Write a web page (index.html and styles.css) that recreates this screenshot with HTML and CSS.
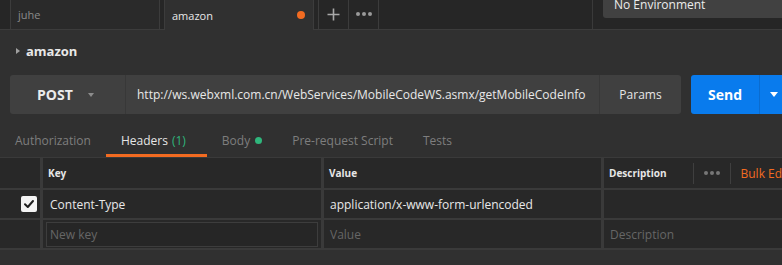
FILE: index.html
```html
<!DOCTYPE html>
<html>
<head>
<meta charset="utf-8">
<link rel="stylesheet" href="styles.css">
</head>
<body>
<div class="app">
  <div class="topbar">
    <div class="tab tab-inactive"><span class="tab-label">juhe</span></div>
    <div class="tab tab-active"><span class="tab-label">amazon</span><span class="unsaved-dot"></span></div>
    <div class="tab tab-icon">
      <svg width="13" height="13" viewBox="0 0 13 13"><path d="M6.5 0.5V12.5M0.5 6.5H12.5" stroke="#a8a8a8" stroke-width="1.6" fill="none"/></svg>
    </div>
    <div class="tab tab-icon tab-more">
      <span class="dot"></span><span class="dot"></span><span class="dot"></span>
    </div>
    <div class="spacer"></div>
    <div class="vdivider"></div>
    <div class="env"><span class="env-label">No Environment</span></div>
  </div>

  <div class="main">
    <div class="title-row">
      <span class="tri-right"></span>
      <span class="title">amazon</span>
    </div>

    <div class="url-row">
      <div class="url-group">
        <div class="method"><span class="method-label">POST</span><span class="caret-down"></span></div>
        <div class="url">http://ws.webxml.com.cn/WebServices/MobileCodeWS.asmx/getMobileCodeInfo</div>
        <div class="params">Params</div>
      </div>
      <div class="send">
        <div class="send-main">Send</div>
        <div class="send-caret"><span class="caret-white"></span></div>
      </div>
    </div>

    <div class="req-tabs">
      <div class="req-tab">Authorization</div>
      <div class="req-tab req-tab-active">Headers <span class="count">(1)</span></div>
      <div class="req-tab">Body <span class="green-dot"></span></div>
      <div class="req-tab">Pre-request Script</div>
      <div class="req-tab">Tests</div>
    </div>

    <div class="table">
      <div class="cell"></div>
      <div class="cell th">Key</div>
      <div class="cell th">Value</div>
      <div class="cell th th-desc">
        <span class="th-item">Description</span>
        <span class="th-item th-spacer"></span>
        <span class="th-item th-sep"></span>
        <span class="th-item th-dots"><span class="sdot"></span><span class="sdot"></span><span class="sdot"></span></span>
        <span class="th-item th-sep"></span>
        <span class="th-item bulk">Bulk Edit</span>
      </div>

      <div class="cell cell-check">
        <span class="checkbox"><svg width="16" height="16" viewBox="0 0 16 16"><path d="M4 8.3L6.8 11L12 5" stroke="#1e1e1e" stroke-width="2" fill="none" stroke-linecap="round" stroke-linejoin="round"/></svg></span>
      </div>
      <div class="cell td td-key">Content-Type</div>
      <div class="cell td td-val">application/x-www-form-urlencoded</div>
      <div class="cell td"></div>

      <div class="cell"></div>
      <div class="cell td-input-cell"><div class="key-input">New key</div></div>
      <div class="cell td placeholder td-val">Value</div>
      <div class="cell td placeholder td-desc">Description</div>
    </div>
  </div>
</div>
</body>
</html>
```
FILE: styles.css
```css
* { box-sizing: border-box; }
html, body {
  margin: 0;
  padding: 0;
  width: 782px;
  height: 265px;
  overflow: hidden;
  background: #303030;
  font-family: "Open Sans", "Liberation Sans", sans-serif;
  color: #e6e6e6;
}
.app { width: 782px; height: 265px; overflow: hidden; }

/* top bar */
.topbar {
  display: flex;
  height: 30px;
  background: #262626;
  border-bottom: 1px solid #3c3c3c;
  padding-left: 10px;
}
.tab {
  height: 30px;
  margin-bottom: -1px;
  border: 1px solid #3c3c3c;
  border-top: none;
  display: flex;
  align-items: center;
  font-size: 11px;
}
.tab-inactive {
  width: 150px;
  background: #2a2a2a;
  color: #8a8a8a;
  padding-left: 7px;
  height: 29px;
  margin-bottom: 0;
  border-bottom: none;
}
.tab-active {
  width: 150px;
  margin-left: 4px;
  background: #303030;
  border-bottom: none;
  color: #e8e8e8;
  padding: 0 8px 0 7px;
  justify-content: space-between;
}
.unsaved-dot {
  width: 8px; height: 8px; border-radius: 50%;
  background: #f26b21;
}
.tab-icon {
  width: 31px;
  height: 29px;
  margin-bottom: 0;
  justify-content: center;
  background: #262626;
  border-bottom: none;
}
.tab-active + .tab-icon { margin-left: 4px; }
.tab-more { border-left: none; width: 30px; gap: 2px; padding-bottom: 1px; }
.dot { width: 4px; height: 4px; border-radius: 50%; background: #9a9a9a; }
.spacer { flex: 1; }
.vdivider { width: 1px; background: #3a3a3a; height: 29px; margin-right: 10px; }
.env {
  width: 179px;
  height: 18px;
  background: #414141;
  border-radius: 0 0 0 3px;
  padding-left: 11px;
  flex-shrink: 0;
}
.env-label {
  display: block;
  font-size: 12px;
  line-height: 10px;
  color: #ececec;
}

/* main */
.main { padding-top: 10px; }
.title-row {
  height: 22px;
  display: flex;
  align-items: center;
  padding-left: 16px;
  gap: 6px;
}
.tri-right {
  width: 0; height: 0;
  border-top: 3.5px solid transparent;
  border-bottom: 3.5px solid transparent;
  border-left: 4px solid #a0a0a0;
}
.title { font-size: 13px; font-weight: 700; color: #e8e8e8; }

.url-row {
  display: flex;
  margin-top: 13px;
  padding-left: 10px;
  height: 39px;
  gap: 10px;
}
.url-group {
  width: 671px;
  flex-shrink: 0;
  display: flex;
  background: #404040;
  border-radius: 3px;
}
.method {
  width: 116px;
  display: flex;
  align-items: center;
  padding-left: 27px;
  gap: 15px;
  border-right: 1px solid #383838;
}
.method-label { font-size: 14px; font-weight: 700; color: #ececec; }
.caret-down {
  width: 0; height: 0;
  border-left: 3.5px solid transparent;
  border-right: 3.5px solid transparent;
  border-top: 4px solid #8c8c8c;
}
.url {
  flex: 1;
  display: flex;
  align-items: center;
  padding-left: 11px;
  font-size: 12px;
  color: #e8e8e8;
  white-space: nowrap;
  overflow: hidden;
  border-right: 1px solid #383838;
}
.params {
  width: 81px;
  display: flex;
  align-items: center;
  justify-content: center;
  font-size: 12px;
  color: #e6e6e6;
}
.send {
  display: flex;
  width: 100px;
  flex-shrink: 0;
  background: #097bed;
  border-radius: 3px;
}
.send-main {
  width: 69px;
  display: flex;
  align-items: center;
  justify-content: center;
  font-size: 14px;
  font-weight: 700;
  color: #ffffff;
  border-right: 1px solid #0a6cd0;
}
.send-caret {
  flex: 1;
  display: flex;
  align-items: center;
  padding-left: 10px;
}
.caret-white {
  width: 0; height: 0;
  border-left: 4px solid transparent;
  border-right: 4px solid transparent;
  border-top: 5px solid #ffffff;
}

/* request tabs */
.req-tabs {
  display: flex;
  margin-top: 10px;
  height: 33px;
}
.req-tab {
  padding: 0 15px;
  display: flex;
  align-items: center;
  gap: 4px;
  font-size: 12px;
  color: #7e7e7e;
  border-bottom: 3px solid transparent;
  padding-top: 3px;
  white-space: nowrap;
}
.req-tab-active { color: #e6e6e6; border-bottom-color: #f26b21; padding-right: 21px; }
.count { color: #2fb67c; }
.green-dot { width: 7px; height: 7px; border-radius: 50%; background: #2fb67c; margin-left: 1px; }

/* table */
.table {
  display: grid;
  grid-template-columns: 40px 278px 277px 1fr;
  grid-template-rows: 30px 28px 28px;
  column-gap: 3px;
  row-gap: 2px;
  background: #3a3a3a;
  padding: 1px 0 2px 0;
}
.cell {
  background: #282828;
  display: flex;
  align-items: center;
  white-space: nowrap;
  overflow: hidden;
}
.th {
  font-size: 10px;
  font-weight: 700;
  color: #e6e6e6;
  padding-left: 5px;
}
.th-desc { padding-left: 5px; gap: 0; }
.th-item { flex-shrink: 0; }
.th-spacer { width: 26px; }
.th-sep { width: 1px; height: 21px; background: #3f3f3f; }
.th-dots { display: flex; gap: 2px; padding: 0 10px 0 10px; }
.sdot { width: 4px; height: 4px; border-radius: 50%; background: #777; }
.bulk { font-size: 12px; font-weight: 400; color: #f26b21; padding-left: 10px; }
.cell-check { justify-content: flex-end; padding-right: 3px; }
.checkbox {
  width: 16px; height: 16px;
  background: #f4f4f4;
  border-radius: 2px;
  display: flex;
}
.td { font-size: 12px; color: #e8e8e8; padding-left: 6px; }
.td-key { padding-left: 7px; }
.td-input-cell { padding: 0 3px 0 3px; }
.key-input {
  width: 272px;
  height: 25px;
  border: 1px solid #3d3d3d;
  background: #262626;
  font-size: 12px;
  color: #666;
  display: flex;
  align-items: center;
  padding-left: 3px;
}
.placeholder { color: #666; }
.td-desc { padding-left: 6px; }
```
